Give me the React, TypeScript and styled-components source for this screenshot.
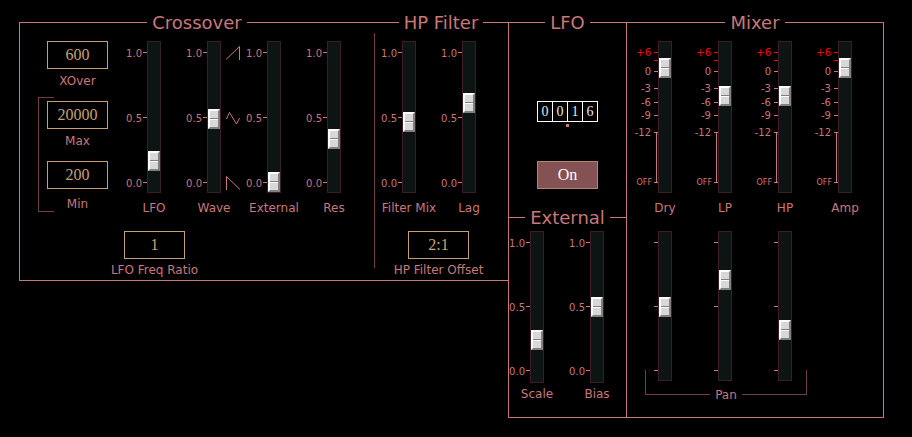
import React, { useId, useState } from "react";
import styled, { createGlobalStyle, css } from "styled-components";

const rose = "#c87878";
const dimRose = "#703f3f";
const tan = "#c8a070";

const GlobalStyle = createGlobalStyle`
  *, *::before, *::after { box-sizing: border-box; }
  body {
    margin: 0;
    background: #000;
    color: ${rose};
    font-family: "DejaVu Sans", sans-serif;
    font-size: 12px;
    line-height: 16px;
  }
`;

const Panel = styled.main`
  display: grid;
  grid-template-columns:
    minmax(355px, 355fr) minmax(134px, 134fr) minmax(118px, 118fr) minmax(258px, 258fr);
  padding: 12px 28px 19px 19px;
`;

const CenterStack = styled.div`
  display: flex;
  flex-direction: column;
`;

const Frame = styled.fieldset<{ $sides: string; $fill?: boolean; $joined?: boolean }>`
  min-width: 0;
  margin: ${(p) => (p.$joined ? "-10px 0 0" : "0")};
  padding: 0;
  border: 1px solid ${rose};
  border-width: ${(p) => p.$sides};
  align-self: ${(p) => (p.$fill ? "stretch" : "start")};
`;

const FrameTitle = styled.legend`
  margin: 0 auto;
  padding: 0 5px;
  font-size: 18px;
  line-height: 21px;
`;

const CrossoverBody = styled.div`
  display: grid;
  grid-template-columns: 70px auto;
  justify-content: start;
  gap: 15px 16px;
  padding: 8px 0 2px 18px;
`;

const HpBody = styled.div`
  display: flex;
  flex-direction: column;
  align-items: flex-start;
  gap: 15px;
  padding: 8px 0 2px 5px;
  background: linear-gradient(${dimRose}, ${dimRose}) left top / 1px 235px no-repeat;
`;

const HpOffset = styled.div`
  display: flex;
  justify-content: center;
  width: 119px;
`;

const LfoBody = styled.div`
  display: flex;
  flex-direction: column;
  align-items: center;
  padding: 68px 0 28px;
`;

const ExternalBody = styled.div`
  margin: 0 -1px 0 -2px;
  padding: 3px 0 15px;
`;

const MixerBody = styled.div`
  display: flex;
  flex-direction: column;
  gap: 15px;
  width: 240px;
  margin: 0 auto;
  padding-top: 8px;
`;

const FieldColumn = styled.div`
  display: flex;
  flex-direction: column;
  align-items: flex-end;
  gap: 8px;
`;

const RangeGroup = styled.div`
  display: flex;
  flex-direction: column;
  align-items: flex-end;
  gap: 12px;
  width: 100%;
  padding-top: 4px;
  border-left: 1px solid ${dimRose};
  background:
    linear-gradient(${dimRose}, ${dimRose}) left top / 15px 1px no-repeat,
    linear-gradient(${dimRose}, ${dimRose}) left bottom / 15px 1px no-repeat;
`;

const FieldBox = styled.div<{ $gap: number }>`
  display: flex;
  flex-direction: column;
  align-items: center;
  gap: ${(p) => p.$gap}px;
  width: 61px;
`;

const NumberInput = styled.input`
  width: 61px;
  height: 28px;
  padding: 0;
  border: 1px solid ${tan};
  border-radius: 0;
  background: #000;
  color: ${tan};
  font-family: "Liberation Serif", serif;
  font-size: 16px;
  text-align: center;
`;

const Caption = styled.label`
  white-space: nowrap;
`;

const SliderRow = styled.div`
  display: flex;
`;

const SliderCell = styled.div<{ $tight?: boolean }>`
  display: flex;
  flex-direction: column;
  align-items: center;
  flex: none;
  gap: ${(p) => (p.$tight ? "3px" : "7px")};
  width: 60px;
`;

const SliderBody = styled.div`
  display: grid;
  grid-template-columns: 23px 14px 23px;
  align-items: start;
`;

const Track = styled.input<{ $short?: boolean }>`
  appearance: none;
  writing-mode: vertical-lr;
  direction: rtl;
  width: 14px;
  height: ${(p) => (p.$short ? "150px" : "152px")};
  margin: 0;
  border: 1px solid #3c1e28;
  background: #0c1414;

  &::-webkit-slider-thumb {
    appearance: none;
    width: 12px;
    height: 20px;
    border: 2px solid;
    border-color: #fff #808080 #808080 #fff;
    background: linear-gradient(
      #d8d8d8 7px,
      #808080 7px,
      #808080 8px,
      #fff 8px,
      #fff 9px,
      #d8d8d8 9px
    );
  }
`;

const Scale = styled.div`
  display: flex;
  flex-direction: column;
  padding-top: 6px;
`;

const Mark = styled.div<{ $span: number; $hot?: boolean }>`
  display: flex;
  justify-content: flex-end;
  align-items: flex-start;
  flex: none;
  height: ${(p) => p.$span}px;
  color: ${(p) => (p.$hot ? "#f00" : rose)};
`;

const MARK_STYLES = {
  unit: css`
    font-size: 10px;
    line-height: 13px;
    padding-right: 1px;
  `,
  gain: css`
    font-size: 10px;
    line-height: 11px;
    padding-right: 3px;
  `,
  off: css`
    font-size: 8px;
    line-height: 11px;
    padding-right: 2px;
  `,
};

const MarkText = styled.span<{ $kind: keyof typeof MARK_STYLES }>`
  white-space: nowrap;
  ${(p) => MARK_STYLES[p.$kind]}
`;

const Tick = styled.span<{ $rail?: boolean }>`
  flex: none;
  width: 4px;
  height: 100%;
  margin-top: 5px;
  border-top: 1px solid currentColor;
  ${(p) =>
    p.$rail &&
    css`
      background: linear-gradient(${rose}, ${rose}) 2px 0 / 1px 100% no-repeat;
    `}
`;

const WaveShapes = styled.div`
  display: flex;
  flex-direction: column;
  gap: 51px;
  padding: 5px 0 0 5px;
`;

const WaveIcon = styled.svg`
  display: block;
  fill: none;
  stroke: ${rose};
  stroke-width: 1;
`;

const Counter = styled.output`
  display: flex;
  border: 1px solid #fff;
`;

const Digit = styled.span`
  width: 15px;
  height: 19px;
  color: #e8e8e8;
  font-family: "Liberation Serif", serif;
  font-size: 14px;
  line-height: 19px;
  text-align: center;

  & + & {
    border-left: 1px solid #fff;
  }

  &:first-child {
    width: 14px;
  }
`;

const CounterDot = styled.span`
  width: 3px;
  height: 3px;
  margin: 2px 0 34px;
  background: ${rose};
`;

const ToggleButton = styled.button`
  width: 61px;
  height: 28px;
  padding: 0;
  border: 1px solid #b08868;
  background: ${(p) => (p["aria-pressed"] ? "#845254" : "#000")};
  color: #fff;
  font-family: "Liberation Serif", serif;
  font-size: 16px;
`;

const PanGroup = styled.div`
  width: 180px;
`;

const PanBracket = styled.div`
  display: flex;
  align-items: flex-end;
  height: 25px;
  margin: -11px 8px 0 10px;
`;

const BracketArm = styled.span<{ $side: "left" | "right" }>`
  flex: 1;
  height: 25px;
  border: 0 solid ${dimRose};
  border-bottom-width: 1px;
  ${(p) => (p.$side === "left" ? "border-left-width: 1px;" : "border-right-width: 1px;")}
`;

const PanTitle = styled.span`
  margin-bottom: -8px;
  padding: 0 5px;
`;

type MarkSpec = { text?: string; span: number; hot?: boolean; rail?: boolean };
type ScaleKind = "unit" | "unitShort" | "gain" | "pan";

const SCALES: Record<ScaleKind, MarkSpec[]> = {
  unit: [
    { text: "1.0", span: 65 },
    { text: "0.5", span: 65 },
    { text: "0.0", span: 1 },
  ],
  unitShort: [
    { text: "1.0", span: 64 },
    { text: "0.5", span: 64 },
    { text: "0.0", span: 1 },
  ],
  gain: [
    { text: "+6", span: 8, hot: true },
    { span: 11, hot: true },
    { text: "0", span: 17 },
    { text: "-3", span: 14 },
    { text: "-6", span: 13 },
    { text: "-9", span: 17 },
    { text: "-12", span: 50, rail: true },
    { text: "OFF", span: 1 },
  ],
  pan: [{ span: 64 }, { span: 64 }, { span: 1 }],
};

function Field({ label, value, gap = 4 }: { label: string; value: string; gap?: number }) {
  const id = useId();
  return (
    <FieldBox $gap={gap}>
      <NumberInput id={id} defaultValue={value} />
      <Caption htmlFor={id}>{label}</Caption>
    </FieldBox>
  );
}

type SliderProps = {
  label: string;
  value: number;
  scale?: ScaleKind;
  tight?: boolean;
  children?: React.ReactNode;
};

function Slider({ label, value, scale = "unit", tight, children }: SliderProps) {
  const id = useId();
  const pan = scale === "pan";
  return (
    <SliderCell $tight={tight}>
      <SliderBody>
        <Scale>
          {SCALES[scale].map((m, i) => (
            <Mark key={i} $span={m.span} $hot={m.hot}>
              {m.text && (
                <MarkText $kind={m.text === "OFF" ? "off" : scale === "gain" ? "gain" : "unit"}>
                  {m.text}
                </MarkText>
              )}
              <Tick $rail={m.rail} />
            </Mark>
          ))}
        </Scale>
        <Track
          id={id}
          type="range"
          min={0}
          max={pan ? 128 : 130}
          defaultValue={value}
          aria-label={pan ? `${label} pan` : undefined}
          $short={pan}
        />
        {children}
      </SliderBody>
      {!pan && <Caption htmlFor={id}>{label}</Caption>}
    </SliderCell>
  );
}

const WAVES = ["M0 13.5L13.5 0.5V14", "M0.5 8L3.5 1.5L10.5 13L13.5 7", "M0.5 14V0.5L14 13.5"];

export default function App() {
  const [lfoOn, setLfoOn] = useState(true);
  return (
    <>
      <GlobalStyle />
      <Panel>
        <Frame $sides="1px 0 1px 1px">
          <FrameTitle>Crossover</FrameTitle>
          <CrossoverBody>
            <FieldColumn>
              <Field label="XOver" value="600" />
              <RangeGroup>
                <Field label="Max" value="20000" />
                <Field label="Min" value="200" gap={7} />
              </RangeGroup>
            </FieldColumn>
            <SliderRow>
              <Slider label="LFO" value={21} />
              <Slider label="Wave" value={63}>
                <WaveShapes>
                  {WAVES.map((d) => (
                    <WaveIcon key={d} width="14" height="14" viewBox="0 0 14 14">
                      <path d={d} />
                    </WaveIcon>
                  ))}
                </WaveShapes>
              </Slider>
              <Slider label="External" value={0} />
              <Slider label="Res" value={43} />
            </SliderRow>
            <span />
            <Field label="LFO Freq Ratio" value="1" gap={3} />
          </CrossoverBody>
        </Frame>

        <Frame $sides="1px 0 1px 0">
          <FrameTitle>HP Filter</FrameTitle>
          <HpBody>
            <SliderRow>
              <Slider label="Filter Mix" value={60} />
              <Slider label="Lag" value={79} />
            </SliderRow>
            <HpOffset>
              <Field label="HP Filter Offset" value="2:1" gap={3} />
            </HpOffset>
          </HpBody>
        </Frame>

        <CenterStack>
          <Frame $sides="1px 0 0 1px" $fill>
            <FrameTitle>LFO</FrameTitle>
            <LfoBody>
              <Counter aria-label="LFO frequency">
                {["0", "0", "1", "6"].map((d, i) => (
                  <Digit key={i}>{d}</Digit>
                ))}
              </Counter>
              <CounterDot />
              <ToggleButton type="button" aria-pressed={lfoOn} onClick={() => setLfoOn(!lfoOn)}>
                {lfoOn ? "On" : "Off"}
              </ToggleButton>
            </LfoBody>
          </Frame>
          <Frame $sides="1px 0 1px 1px" $fill $joined>
            <FrameTitle>External</FrameTitle>
            <ExternalBody>
              <SliderRow>
                <Slider label="Scale" value={32} scale="unitShort" tight />
                <Slider label="Bias" value={65} scale="unitShort" tight />
              </SliderRow>
            </ExternalBody>
          </Frame>
        </CenterStack>

        <Frame $sides="1px" $fill>
          <FrameTitle>Mixer</FrameTitle>
          <MixerBody>
            <SliderRow>
              <Slider label="Dry" value={114} scale="gain" />
              <Slider label="LP" value={86} scale="gain" />
              <Slider label="HP" value={86} scale="gain" />
              <Slider label="Amp" value={114} scale="gain" />
            </SliderRow>
            <PanGroup>
              <SliderRow>
                <Slider label="Dry" value={63} scale="pan" />
                <Slider label="LP" value={90} scale="pan" />
                <Slider label="HP" value={40} scale="pan" />
              </SliderRow>
              <PanBracket>
                <BracketArm $side="left" />
                <PanTitle>Pan</PanTitle>
                <BracketArm $side="right" />
              </PanBracket>
            </PanGroup>
          </MixerBody>
        </Frame>
      </Panel>
    </>
  );
}
